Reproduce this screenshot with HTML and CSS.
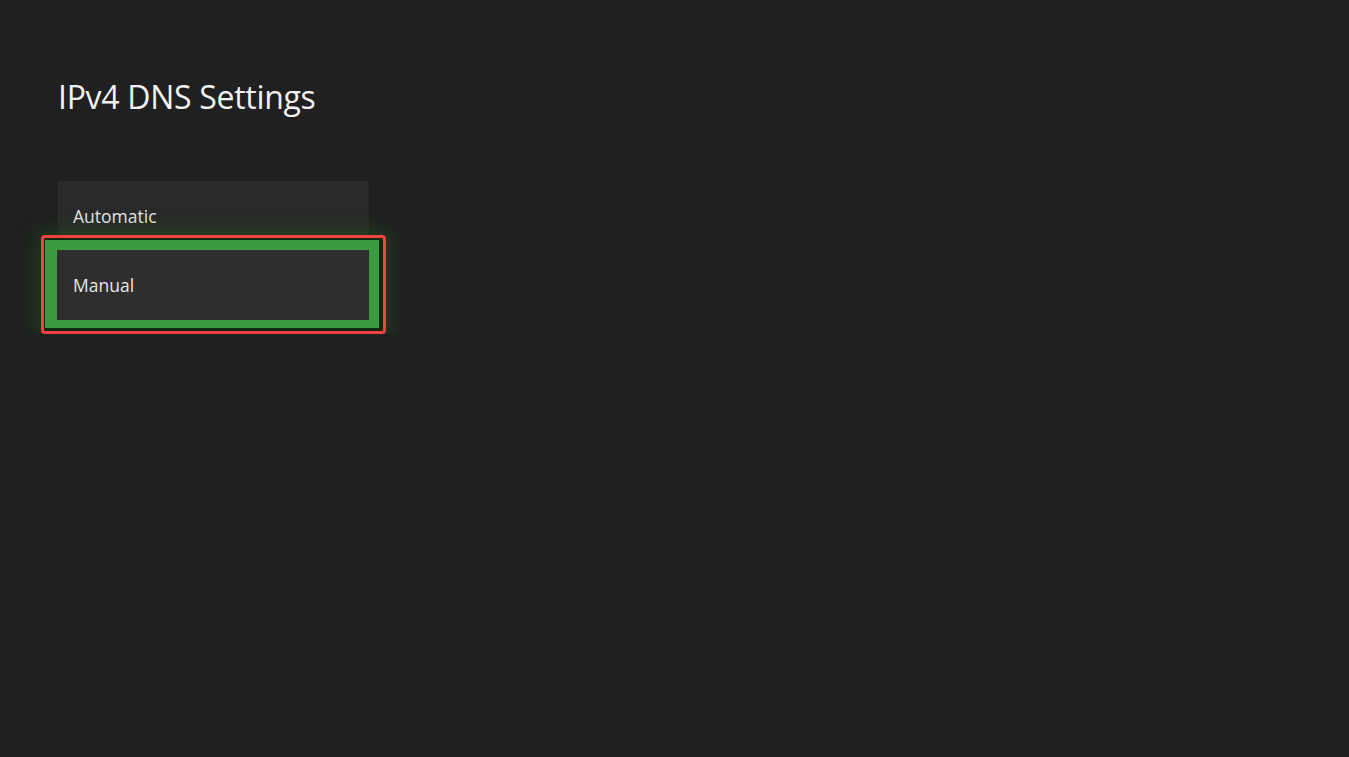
FILE: index.html
```html
<!DOCTYPE html>
<html lang="en">
<head>
    <meta charset="UTF-8">
    <meta name="viewport" content="width=device-width, initial-scale=1.0">
    <title>IPv4 DNS Settings</title>
    <link rel="stylesheet" href="styles.css">
</head>
<body>

<div class="page">
    <h1 class="title">IPv4 DNS Settings</h1>

    <div class="options">
        <div class="option">Automatic</div>
        <div class="highlight">
            <div class="option focused">Manual</div>
        </div>
    </div>
</div>

</body>
</html>
```

FILE: styles.css
```css
body {
    margin: 0;
    padding: 0;
    background-color: #202020;
    font-family: "Open Sans", "Noto Sans", Arial, sans-serif;
    color: #f2f2f2;
}

.page {
    padding: 74px 0 0 58px;
}

.title {
    margin: 0;
    font-size: 32px;
    font-weight: 400;
    line-height: 46px;
    letter-spacing: -0.3px;
}

.options {
    margin-top: 61px;
    width: 311px;
    display: flex;
    flex-direction: column;
}

.option {
    height: 70px;
    padding-left: 15px;
    display: flex;
    align-items: center;
    font-size: 17.5px;
    background-color: #2a2a2a;
    color: #e6e6e6;
}

/* recuadro rojo de anotacion */
.highlight {
    position: relative;
    margin: -16px 0 0 -17px;
    width: 345px;
    height: 99px;
    border: 3px solid #f24242;
    border-radius: 4px;
    box-sizing: border-box;
    background-color: #10280f;
    padding: 2px 4px 3px 1px;
    display: flex;
    box-shadow: 0 0 18px 4px rgba(25, 90, 25, 0.5);
}

.option.focused {
    flex: 1;
    height: auto;
    padding-left: 16px;
    border: 10px solid #3c9a3e;
    border-left-width: 12px;
    border-bottom-width: 8px;
    background-color: #2e2e2e;
}
```
